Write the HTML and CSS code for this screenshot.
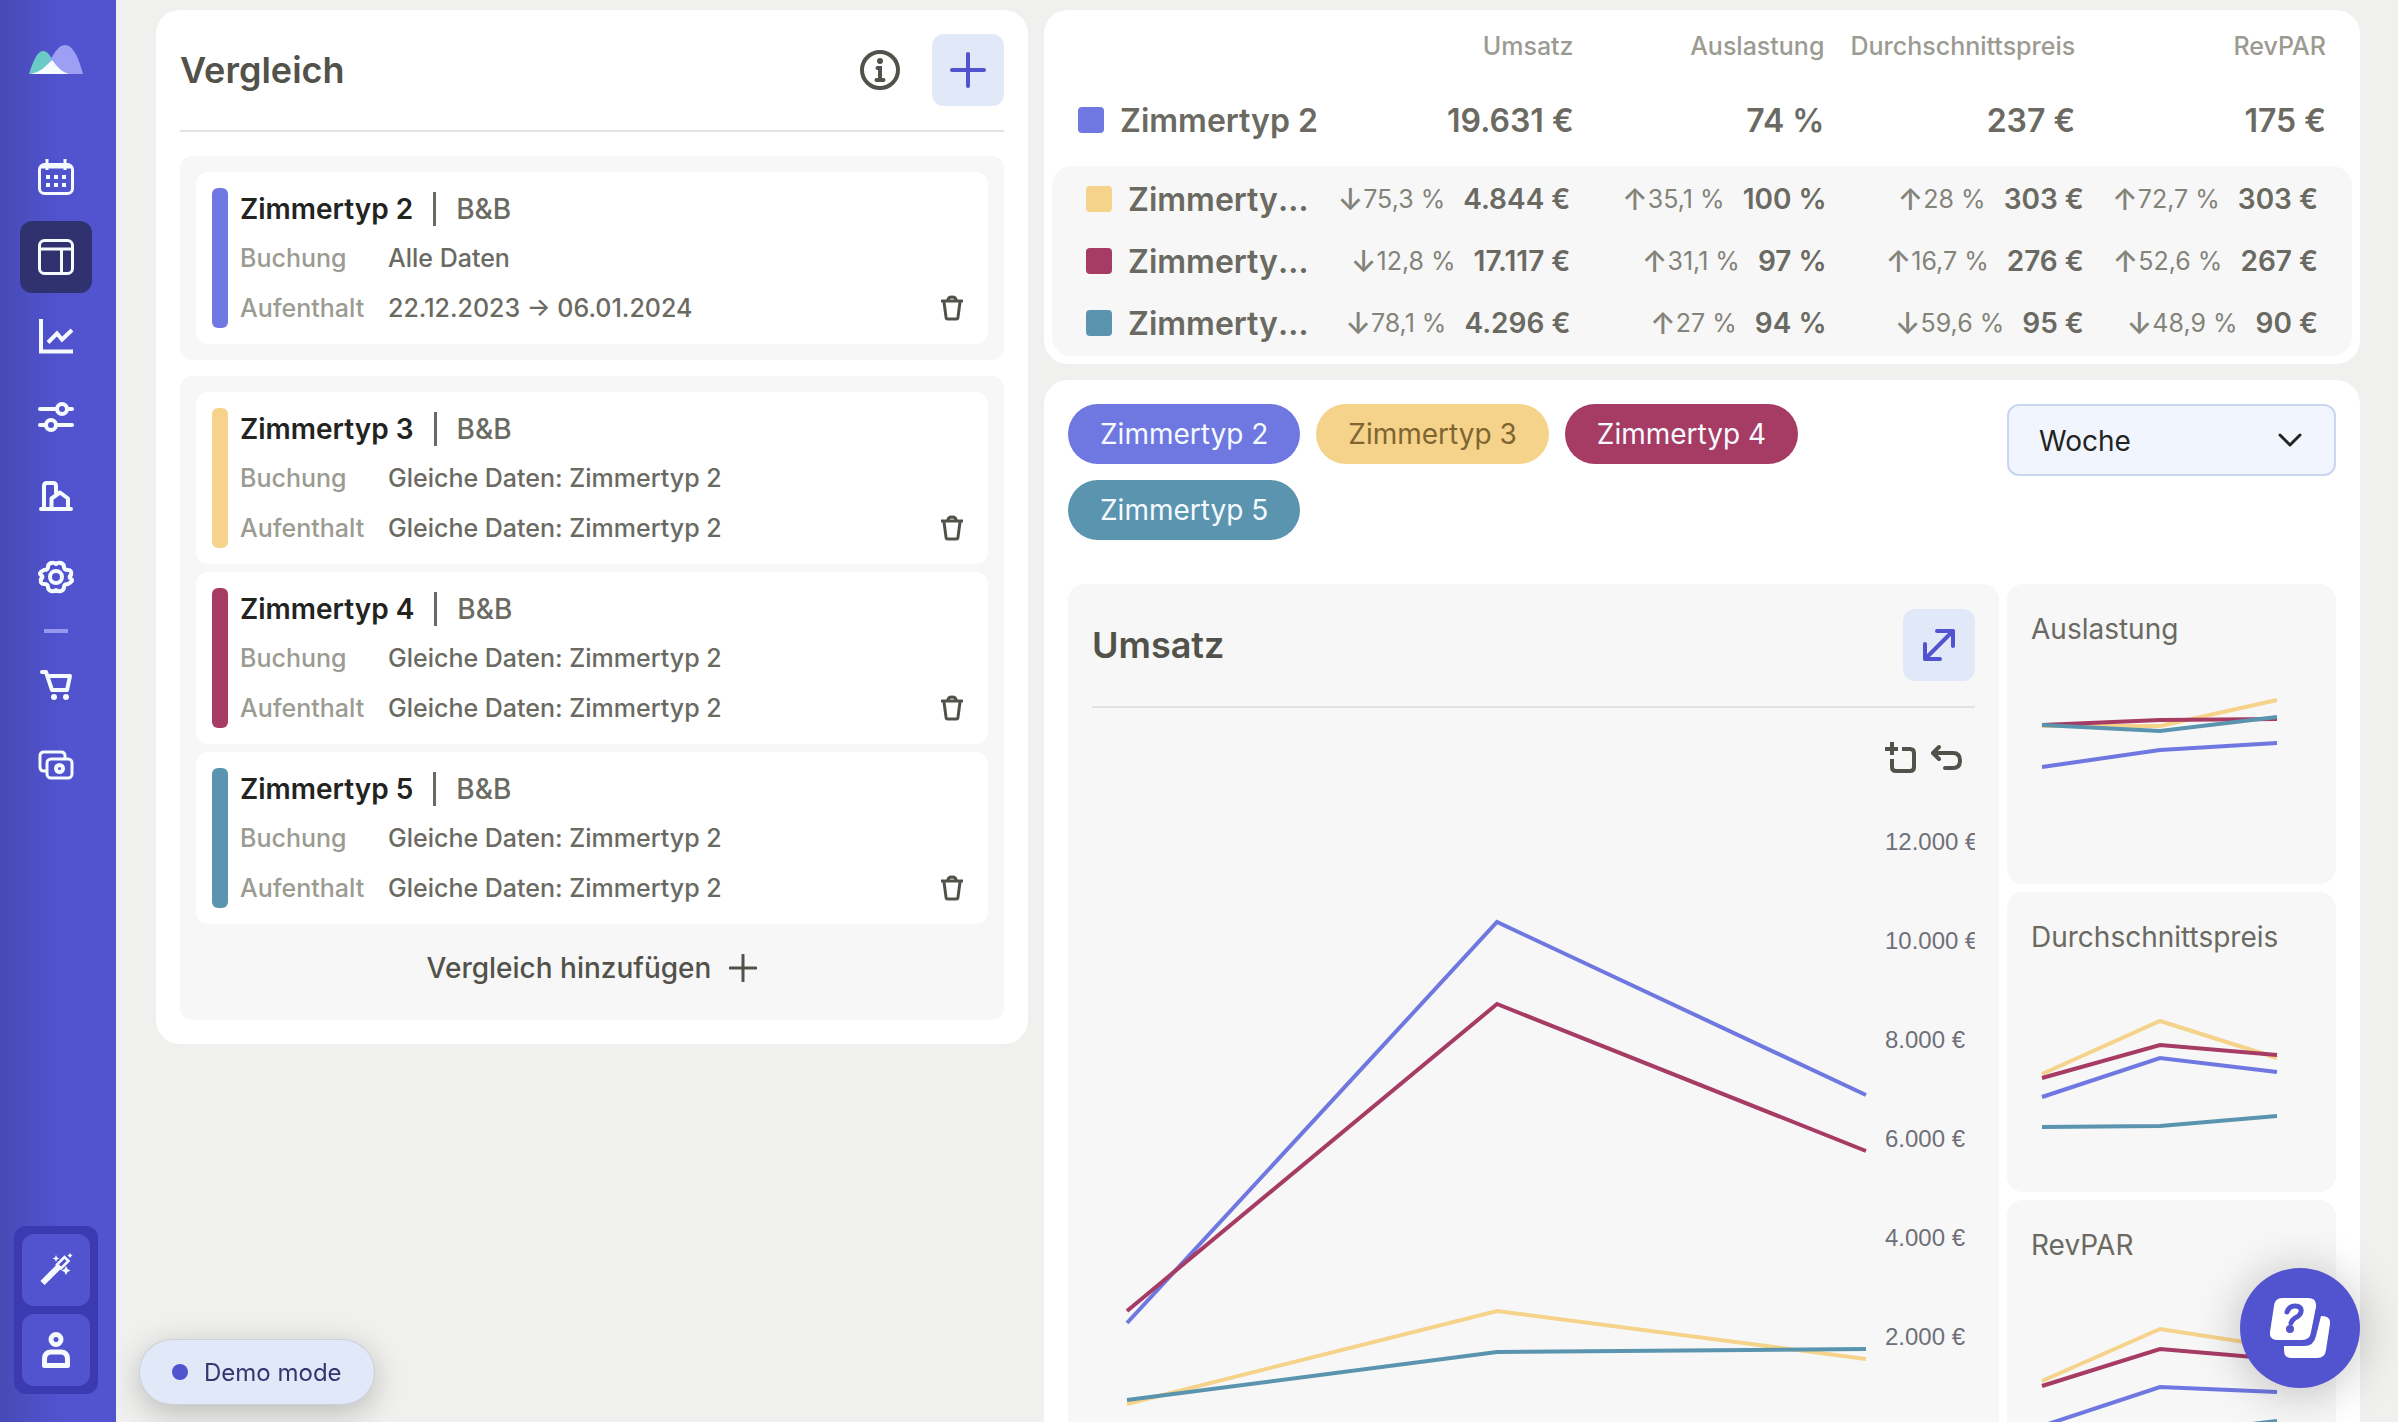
FILE: index.html
```html
<!DOCTYPE html>
<html lang="de">
<head>
<meta charset="utf-8">
<meta name="viewport" content="width=device-width, initial-scale=1">
<title>Vergleich</title>
<link rel="stylesheet" href="styles.css">
</head>
<body>
<div class="app">
  <aside class="sidebar">
    <a class="logo" href="#" aria-label="Start">
      <svg width="56" height="32" viewBox="0 0 56 32">
        <path fill="#6acbc6" d="M1 30C5 18 9 7 15 7c4 0 7 4 10 10L20 30z"/>
        <path fill="#9c9ff3" d="M20 30V20C26 10 30 1 37 1c8 0 14 13 18 29z"/>
        <path fill="#f5fbff" d="M3 30c9-2 14-7 21-14 5 6 9 12 17 14z"/>
      </svg>
    </a>
    <nav class="nav">
      <a class="nav-item" href="#" aria-label="Kalender">
        <svg class="icon" viewBox="0 0 36 36"><rect x="1.500" y="5.500" width="33" height="29" rx="5"/><path d="M9 0v11M27 0v11M2 8h32"/><path class="solid" d="M8 16h4v4H8zM16 16h4v4h-4zM24 16h4v4h-4zM8 24h4v4H8zM16 24h4v4h-4zM24 24h4v4h-4z"/></svg>
      </a>
      <a class="nav-item nav-item-active" href="#" aria-label="Vergleich">
        <svg class="icon" viewBox="0 0 36 36"><rect x="1.500" y="1.500" width="33" height="33" rx="5"/><path d="M2 10h32M23.500 10v24"/></svg>
      </a>
      <a class="nav-item" href="#" aria-label="Statistik">
        <svg class="icon" viewBox="0 0 36 36"><path stroke-width="4" d="M3 0v32.500h32"/><path stroke-width="4" d="M10 23.500l9-9 5 6L34 11"/></svg>
      </a>
      <a class="nav-item" href="#" aria-label="Einstellungen">
        <svg class="icon round" viewBox="0 0 36 36"><path stroke-width="4" d="M2 10h16M30 10h4M2 26h5M19 26h15"/><circle stroke-width="4" cx="24" cy="10" r="5"/><circle stroke-width="4" cx="13" cy="26" r="5"/></svg>
      </a>
      <a class="nav-item" href="#" aria-label="Unterkunft">
        <svg class="icon round" viewBox="0 0 36 36"><path stroke-width="4" d="M3 30h30M6 29V7q0-3 3-3h6q3 0 3 3v7M13.500 29V19.500L22 13.500l8 6V29"/></svg>
      </a>
      <a class="nav-item" href="#" aria-label="System">
        <svg class="icon round" viewBox="0 0 36 36"><circle stroke-width="4" cx="18" cy="18" r="6"/><path stroke-width="4" d="M18 5Q20 3 23 4T26 8Q26 11 30 11T33 16Q30 18 33 20T30 25Q26 25 26 28T23 32Q20 33 18 31Q16 33 13 32T10 28Q10 25 6 25T3 20Q6 18 3 16T6 11Q10 11 10 8T13 4Q16 3 18 5z"/></svg>
      </a>
      <span class="nav-divider"></span>
      <a class="nav-item" href="#" aria-label="Warenkorb">
        <svg class="icon round" viewBox="0 0 36 36"><path stroke-width="4" d="M4 5h4l6 18h15l3-14H10"/><circle class="solid" cx="16" cy="30" r="3"/><circle class="solid" cx="28" cy="30" r="3"/></svg>
      </a>
      <a class="nav-item" href="#" aria-label="Zahlungen">
        <svg class="icon" viewBox="0 0 36 36"><rect x="9" y="12" width="25" height="19" rx="4"/><path d="M8 24H6q-4 0-4-4V9q0-4 4-4h17q4 0 4 4v3"/><circle stroke-width="4" cx="21.500" cy="21.500" r="3.500"/></svg>
      </a>
    </nav>
    <div class="account">
      <button class="account-btn" type="button" aria-label="Assistent">
        <svg class="icon" viewBox="0 0 36 36"><path stroke-width="6" d="M4.500 31L22 13.500"/><path stroke-width="2.500" d="M23 16.500l-4-4 7.500-7.500 4 4z"/><path class="solid" d="M18 3l1 2.500 2.500 1-2.500 1-1 2.500-1-2.500-2.500-1 2.500-1zM28 14l1.500 3 3 1.500-3 1.500-1.500 3-1.500-3-3-1.500 3-1.500zM32 1l1 1.500 1.500 1-1.500 1-1 1.500-1-1.500-1.500-1 1.500-1z"/></svg>
      </button>
      <button class="account-btn" type="button" aria-label="Konto">
        <svg class="icon" viewBox="0 0 36 36"><circle stroke-width="5" cx="18" cy="7.500" r="5"/><path stroke-width="5" stroke-linejoin="round" d="M6.500 33.500V27q0-7 7-7h9q7 0 7 7v6.500z"/></svg>
      </button>
    </div>
  </aside>

  <main class="main">
    <section class="card compare">
      <header class="card-head">
        <h1 class="heading">Vergleich</h1>
        <div class="head-actions">
          <button class="plain-btn" type="button" aria-label="Information">
            <svg width="40" height="40" viewBox="0 0 40 40" fill="none" stroke="currentColor" stroke-width="4"><circle cx="20" cy="20" r="18"/><path stroke-linecap="round" d="M17.500 18H20v12M16.500 30h7"/><circle fill="currentColor" stroke="none" cx="20" cy="11" r="3"/></svg>
          </button>
          <button class="tint-btn" type="button" aria-label="Neu">
            <svg width="36" height="36" viewBox="0 0 36 36" fill="none" stroke="currentColor" stroke-width="4" stroke-linecap="round"><path d="M18 2v32M2 18h32"/></svg>
          </button>
        </div>
      </header>

      <div class="group">
        <article class="entry">
          <span class="entry-bar bg-blue"></span>
          <div class="entry-body">
            <h2 class="entry-title">Zimmertyp 2<span class="entry-plan">B&amp;B</span></h2>
            <dl class="entry-data"><dt>Buchung</dt><dd>Alle Daten</dd><dt>Aufenthalt</dt><dd>22.12.2023 → 06.01.2024</dd></dl>
          </div>
          <button class="trash" type="button" aria-label="Löschen"><svg width="24" height="26" viewBox="0 0 24 26"><path d="M1 6h22M8 5q0-3 4-3t4 3M4 7l2 15q0 2 2 2h8q2 0 2-2l2-15"/></svg></button>
        </article>
      </div>

      <div class="group">
        <article class="entry">
          <span class="entry-bar bg-yellow"></span>
          <div class="entry-body">
            <h2 class="entry-title">Zimmertyp 3<span class="entry-plan">B&amp;B</span></h2>
            <dl class="entry-data"><dt>Buchung</dt><dd>Gleiche Daten: Zimmertyp 2</dd><dt>Aufenthalt</dt><dd>Gleiche Daten: Zimmertyp 2</dd></dl>
          </div>
          <button class="trash" type="button" aria-label="Löschen"><svg width="24" height="26" viewBox="0 0 24 26"><path d="M1 6h22M8 5q0-3 4-3t4 3M4 7l2 15q0 2 2 2h8q2 0 2-2l2-15"/></svg></button>
        </article>
        <article class="entry">
          <span class="entry-bar bg-red"></span>
          <div class="entry-body">
            <h2 class="entry-title">Zimmertyp 4<span class="entry-plan">B&amp;B</span></h2>
            <dl class="entry-data"><dt>Buchung</dt><dd>Gleiche Daten: Zimmertyp 2</dd><dt>Aufenthalt</dt><dd>Gleiche Daten: Zimmertyp 2</dd></dl>
          </div>
          <button class="trash" type="button" aria-label="Löschen"><svg width="24" height="26" viewBox="0 0 24 26"><path d="M1 6h22M8 5q0-3 4-3t4 3M4 7l2 15q0 2 2 2h8q2 0 2-2l2-15"/></svg></button>
        </article>
        <article class="entry">
          <span class="entry-bar bg-teal"></span>
          <div class="entry-body">
            <h2 class="entry-title">Zimmertyp 5<span class="entry-plan">B&amp;B</span></h2>
            <dl class="entry-data"><dt>Buchung</dt><dd>Gleiche Daten: Zimmertyp 2</dd><dt>Aufenthalt</dt><dd>Gleiche Daten: Zimmertyp 2</dd></dl>
          </div>
          <button class="trash" type="button" aria-label="Löschen"><svg width="24" height="26" viewBox="0 0 24 26"><path d="M1 6h22M8 5q0-3 4-3t4 3M4 7l2 15q0 2 2 2h8q2 0 2-2l2-15"/></svg></button>
        </article>
        <button class="add-btn" type="button">Vergleich hinzufügen
          <svg width="28" height="28" viewBox="0 0 28 28" fill="none" stroke="currentColor" stroke-width="3" stroke-linecap="round"><path d="M14 1v26M1 14h26"/></svg>
        </button>
      </div>
    </section>

    <div class="results">
      <table class="card summary">
        <thead>
          <tr><td></td><th scope="col">Umsatz</th><th scope="col">Auslastung</th><th scope="col">Durchschnittspreis</th><th scope="col">RevPAR</th></tr>
        </thead>
        <tbody class="base">
          <tr><th scope="row"><i class="swatch bg-blue"></i><span>Zimmertyp 2</span></th><td>19.631 €</td><td>74 %</td><td>237 €</td><td>175 €</td></tr>
        </tbody>
        <tbody class="others">
          <tr><th scope="row"><i class="swatch bg-yellow"></i><span>Zimmertyp 3</span></th>
            <td><span class="delta down">75,3 %</span>4.844 €</td><td><span class="delta up">35,1 %</span>100 %</td><td><span class="delta up">28 %</span>303 €</td><td><span class="delta up">72,7 %</span>303 €</td></tr>
          <tr><th scope="row"><i class="swatch bg-red"></i><span>Zimmertyp 4</span></th>
            <td><span class="delta down">12,8 %</span>17.117 €</td><td><span class="delta up">31,1 %</span>97 %</td><td><span class="delta up">16,7 %</span>276 €</td><td><span class="delta up">52,6 %</span>267 €</td></tr>
          <tr><th scope="row"><i class="swatch bg-teal"></i><span>Zimmertyp 5</span></th>
            <td><span class="delta down">78,1 %</span>4.296 €</td><td><span class="delta up">27 %</span>94 %</td><td><span class="delta down">59,6 %</span>95 €</td><td><span class="delta down">48,9 %</span>90 €</td></tr>
        </tbody>
      </table>

      <section class="card charts">
        <div class="pills">
          <button class="pill bg-blue" type="button">Zimmertyp 2</button>
          <button class="pill pill-dark bg-yellow" type="button">Zimmertyp 3</button>
          <button class="pill bg-red" type="button">Zimmertyp 4</button>
          <button class="pill bg-teal" type="button">Zimmertyp 5</button>
        </div>
        <select class="period" aria-label="Zeitraum"><option>Woche</option><option>Monat</option></select>

        <div class="panel">
          <header class="card-head">
            <h2 class="heading">Umsatz</h2>
            <button class="tint-btn" type="button" aria-label="Vergrößern">
              <svg width="32" height="32" viewBox="0 0 32 32" fill="none" stroke="currentColor" stroke-width="4" stroke-linecap="round" stroke-linejoin="round"><path d="M2 30L30 2M14 2h16v15M2 15v15h15"/></svg>
            </button>
          </header>
          <div class="tools">
            <button class="plain-btn" type="button" aria-label="Bereich zoomen"><svg width="32" height="32" viewBox="0 0 32 32" fill="none" stroke="currentColor" stroke-width="4"><path d="M7 0v13M0 7h13M17 7h8q4 0 4 4v14q0 4-4 4H11q-4 0-4-4v-8"/></svg></button>
            <button class="plain-btn" type="button" aria-label="Zurücksetzen"><svg width="32" height="32" viewBox="0 0 32 32" fill="none" stroke="currentColor" stroke-width="4" stroke-linecap="round" stroke-linejoin="round"><path d="M8 5L2 11l6 6M3 11h19q7 0 7 7.500T22 26h-8"/></svg></button>
          </div>
          <div class="plot">
            <svg class="lines" viewBox="0 0 740 620" preserveAspectRatio="none">
              <polyline class="s-blue" points="0,481 370,80 739,253"/>
              <polyline class="s-yellow" points="0,562 370,469 739,517"/>
              <polyline class="s-red" points="0,469 370,162 739,309"/>
              <polyline class="s-teal" points="0,558 370,510 739,507"/>
            </svg>
            <ul class="axis"><li>12.000 €</li><li>10.000 €</li><li>8.000 €</li><li>6.000 €</li><li>4.000 €</li><li>2.000 €</li><li>0 €</li></ul>
          </div>
        </div>

        <div class="minis">
          <article class="mini">
            <h3>Auslastung</h3>
            <svg class="lines" viewBox="0 0 238 160" preserveAspectRatio="none">
              <polyline class="s-blue" points="0,97 119,80 237,73"/>
              <polyline class="s-yellow" points="0,56 119,56 237,30"/>
              <polyline class="s-red" points="0,55 119,50 237,49"/>
              <polyline class="s-teal" points="0,55 119,61 237,47"/>
            </svg>
          </article>
          <article class="mini">
            <h3>Durchschnittspreis</h3>
            <svg class="lines" viewBox="0 0 238 160" preserveAspectRatio="none">
              <polyline class="s-blue" points="0,119 119,80 237,94"/>
              <polyline class="s-yellow" points="0,96 119,43 237,80"/>
              <polyline class="s-red" points="0,100 119,67 237,77"/>
              <polyline class="s-teal" points="0,149 119,148 237,138"/>
            </svg>
          </article>
          <article class="mini">
            <h3>RevPAR</h3>
            <svg class="lines" viewBox="0 0 238 160" preserveAspectRatio="none">
              <polyline class="s-blue" points="0,140 119,101 237,106"/>
              <polyline class="s-yellow" points="0,95 119,43 237,61"/>
              <polyline class="s-red" points="0,100 119,63 237,73"/>
              <polyline class="s-teal" points="0,155 119,149 237,135"/>
            </svg>
          </article>
        </div>
      </section>
    </div>
  </main>
</div>

<div class="demo"><span class="demo-dot"></span>Demo mode</div>
<button class="help" type="button" aria-label="Hilfe">
  <svg width="60" height="60" viewBox="0 0 60 60"><path fill="#fff" d="M12 0h26q9 0 8 9l-5 25q-1 8-9 8H8q-9 0-8-8L4 8q1-8 8-8z"/><path fill="none" stroke="#5153cf" stroke-width="5" stroke-linecap="round" d="M17 14q2-6 8-6 7 0 6 6-1 4-6 6-3 2-4 5"/><circle fill="#5153cf" cx="20" cy="31" r="4"/><path fill="#fff" d="M51 18q10 0 9 8l-4 26q-1 8-9 8H21q-7 0-7-8v-4h20q10 0 12-10z"/></svg>
</button>
</body>
</html>
```
FILE: styles.css
```css
* { box-sizing: border-box; }

body {
  margin: 0;
  height: 100vh;
  overflow: hidden;
  background: #f0f0ef;
  color: #52524b;
  font-family: Inter, "Liberation Sans", sans-serif;
  font-size: 24px;
}

h1, h2, h3, ul, dl, dd { margin: 0; padding: 0; }
button { margin: 0; padding: 0; border: 0; background: none; color: inherit; font: inherit; cursor: pointer; }

.bg-blue { background: #6f77e0; }
.bg-yellow { background: #f5d38a; }
.bg-red { background: #a63b64; }
.bg-teal { background: #5a94af; }

.app { display: flex; height: 100vh; }

/* Sidebar */
.sidebar {
  display: flex;
  flex: none;
  flex-direction: column;
  align-items: center;
  width: 116px;
  padding: 44px 4px 28px 0;
  background: linear-gradient(90deg, #484ab6, #5153cf 60px);
}
.logo { display: block; height: 97px; }
.logo svg { display: block; }
.nav { display: flex; flex-direction: column; align-items: center; gap: 8px; }
.nav-item { display: grid; place-items: center; width: 72px; height: 72px; border-radius: 12px; }
.nav-item-active { background: #30326f; }
.nav-divider { width: 24px; height: 4px; margin: 8px 0; background: #9698f0; }
.icon { width: 36px; height: 36px; fill: none; stroke: #f5faff; stroke-width: 3; }
.icon .solid { fill: #f5faff; stroke: none; }
.round { stroke-linecap: round; stroke-linejoin: round; }
.account {
  display: flex;
  flex-direction: column;
  gap: 8px;
  width: 84px;
  margin-top: auto;
  padding: 8px;
  border-radius: 12px;
  background: #3b3ab0;
}
.account-btn { display: grid; place-items: center; height: 72px; border-radius: 12px; background: #5153cf; }

/* Page grid */
.main {
  display: grid;
  flex: 1;
  grid-template-columns: 218fr 329fr;
  align-items: start;
  gap: 16px;
  min-width: 0;
  padding: 10px 38px 0 40px;
}
.card { border-radius: 24px; background: #fff; }
.card-head {
  display: flex;
  align-items: center;
  justify-content: space-between;
  padding-bottom: 24px;
  border-bottom: 2px solid #e2e2e2;
}
.heading { font-size: 36px; font-weight: 600; line-height: 48px; }
.head-actions { display: flex; align-items: center; gap: 32px; }
.plain-btn { display: grid; place-items: center; }
.tint-btn {
  display: grid;
  place-items: center;
  width: 72px;
  height: 72px;
  border-radius: 12px;
  background: #e1e8f8;
  color: #5153cf;
}

/* Comparison list */
.compare { display: flex; flex-direction: column; gap: 16px; padding: 24px; }
.compare .card-head { margin-bottom: 8px; }
.group { display: flex; flex-direction: column; gap: 8px; padding: 16px; border-radius: 12px; background: #f7f7f7; }
.entry { display: flex; align-items: stretch; gap: 12px; padding: 16px; border-radius: 12px; background: #fff; }
.entry-bar { width: 16px; border-radius: 6px; }
.entry-body { flex: 1; }
.entry-title { display: flex; align-items: center; height: 42px; margin-bottom: 8px; color: #23231f; font-size: 28px; font-weight: 600; }
.entry-plan { margin-left: 20px; padding-left: 20px; border-left: 3px solid #6a6a62; color: #6a6a62; font-weight: 500; line-height: 34px; }
.entry-data {
  display: grid;
  grid-template-columns: 136px 1fr;
  gap: 10px 12px;
  align-items: center;
  font-size: 25px;
  font-weight: 500;
  line-height: 40px;
}
.entry-data dt { color: #9b9b92; }
.entry-data dd { color: #6a6a62; }
.trash { display: grid; place-items: center; align-self: flex-end; width: 40px; height: 40px; }
.trash svg { fill: none; stroke: #52524b; stroke-width: 3; }
.add-btn { display: flex; align-items: center; justify-content: center; gap: 18px; height: 72px; font-size: 28px; font-weight: 500; }

/* Summary table */
.results { display: flex; flex-direction: column; gap: 16px; min-width: 0; }
.summary { display: block; padding: 8px; color: #6a6a62; }
.summary thead, .summary tbody { display: block; }
.summary tr { display: grid; align-items: center; white-space: nowrap; }
.summary th, .summary td { display: flex; align-items: center; justify-content: flex-end; min-width: 0; padding: 0; font-weight: 600; }
.summary thead tr, .base tr { grid-template-columns: repeat(5, 1fr); gap: 6px; padding: 0 26px; }
.summary thead tr { height: 56px; }
.summary thead th { color: #9b9b92; font-size: 25px; font-weight: 500; }
.base tr { height: 92px; font-size: 32px; }
.summary tbody th { justify-content: flex-start; gap: 16px; font-size: 32px; }
.summary tbody th span { overflow: hidden; text-overflow: ellipsis; }
.swatch { flex: none; width: 26px; height: 26px; border-radius: 4px; }
.others { padding: 2px 34px; border-radius: 20px; background: #f7f7f7; }
.others tr { grid-template-columns: 226fr 258fr 256fr 257fr 234fr; height: 62px; font-size: 28px; }
.delta { display: flex; align-items: center; margin-right: 18px; color: #83837a; font-size: 25px; font-weight: 400; line-height: 32px; }
.delta::before { font-size: 30px; font-weight: 500; }
.up::before { content: "↑"; }
.down::before { content: "↓"; }

/* Charts */
.charts {
  display: grid;
  grid-template-columns: 31fr 11fr;
  align-items: start;
  gap: 44px 8px;
  padding: 24px;
}
.pills { display: flex; flex-wrap: wrap; gap: 16px; }
.pill { height: 60px; padding: 0 32px; border-radius: 30px; color: #f5faff; font-size: 28px; }
.pill-dark { color: #7e6532; }
.period {
  appearance: none;
  width: 100%;
  height: 72px;
  padding: 2px 30px 0;
  border: 2px solid #c9d6f2;
  border-radius: 12px;
  background: #f1f5fd url("data:image/svg+xml,%3Csvg xmlns='http://www.w3.org/2000/svg' viewBox='0 0 24 16'%3E%3Cpath d='M2 3l10 10L22 3' fill='none' stroke='%2323231f' stroke-width='3' stroke-linecap='round' stroke-linejoin='round'/%3E%3C/svg%3E") no-repeat right 32px center / 24px 16px;
  color: #23231f;
  font: inherit;
  font-size: 28px;
}
.panel { padding: 24px; border-radius: 16px; background: #f7f7f7; }
.panel .card-head { min-height: 100px; }
.tools { display: flex; align-items: flex-start; justify-content: flex-end; gap: 14px; height: 84px; padding: 34px 12px 0 0; }
.plot { display: flex; overflow: hidden; padding-left: 35px; }
.lines { display: block; flex: 1; min-width: 0; height: 620px; overflow: visible; fill: none; stroke-width: 4; }
.plot .lines { margin-top: 50px; }
.lines polyline { vector-effect: non-scaling-stroke; }
.s-blue { stroke: #6f77e0; }
.s-yellow { stroke: #f5d38a; }
.s-red { stroke: #a63b64; }
.s-teal { stroke: #5a94af; }
.axis {
  display: flex;
  flex: none;
  flex-direction: column;
  width: 90px;
  margin-left: 18px;
  overflow: hidden;
  color: #6e7079;
  font-family: "Liberation Sans", sans-serif;
  line-height: 99px;
  list-style: none;
  white-space: nowrap;
}

.minis { display: grid; gap: 8px; }
.mini { height: 300px; padding: 24px 24px 0; border-radius: 16px; background: #f7f7f7; }
.mini h3 { color: #6a6a62; font-size: 28px; font-weight: 400; line-height: 42px; }
.mini .lines { width: calc(100% - 45px); height: 160px; margin: 20px 0 0 11px; }

/* Floating controls */
.demo {
  position: fixed;
  bottom: 18px;
  left: 140px;
  display: flex;
  align-items: center;
  gap: 16px;
  height: 64px;
  padding: 0 32px;
  border-radius: 32px;
  background: #e1e8f8;
  box-shadow: 0 0 0 1px #cdd0d8, 0 8px 32px rgb(0 0 0 / 24%);
  color: #33366f;
}
.demo-dot { width: 16px; height: 16px; border-radius: 50%; background: #5153cf; }
.help {
  position: fixed;
  right: 38px;
  bottom: 34px;
  display: grid;
  place-items: center;
  width: 120px;
  height: 120px;
  border-radius: 50%;
  background: #5153cf;
  box-shadow: 0 4px 48px rgb(0 0 0 / 24%);
}
```
